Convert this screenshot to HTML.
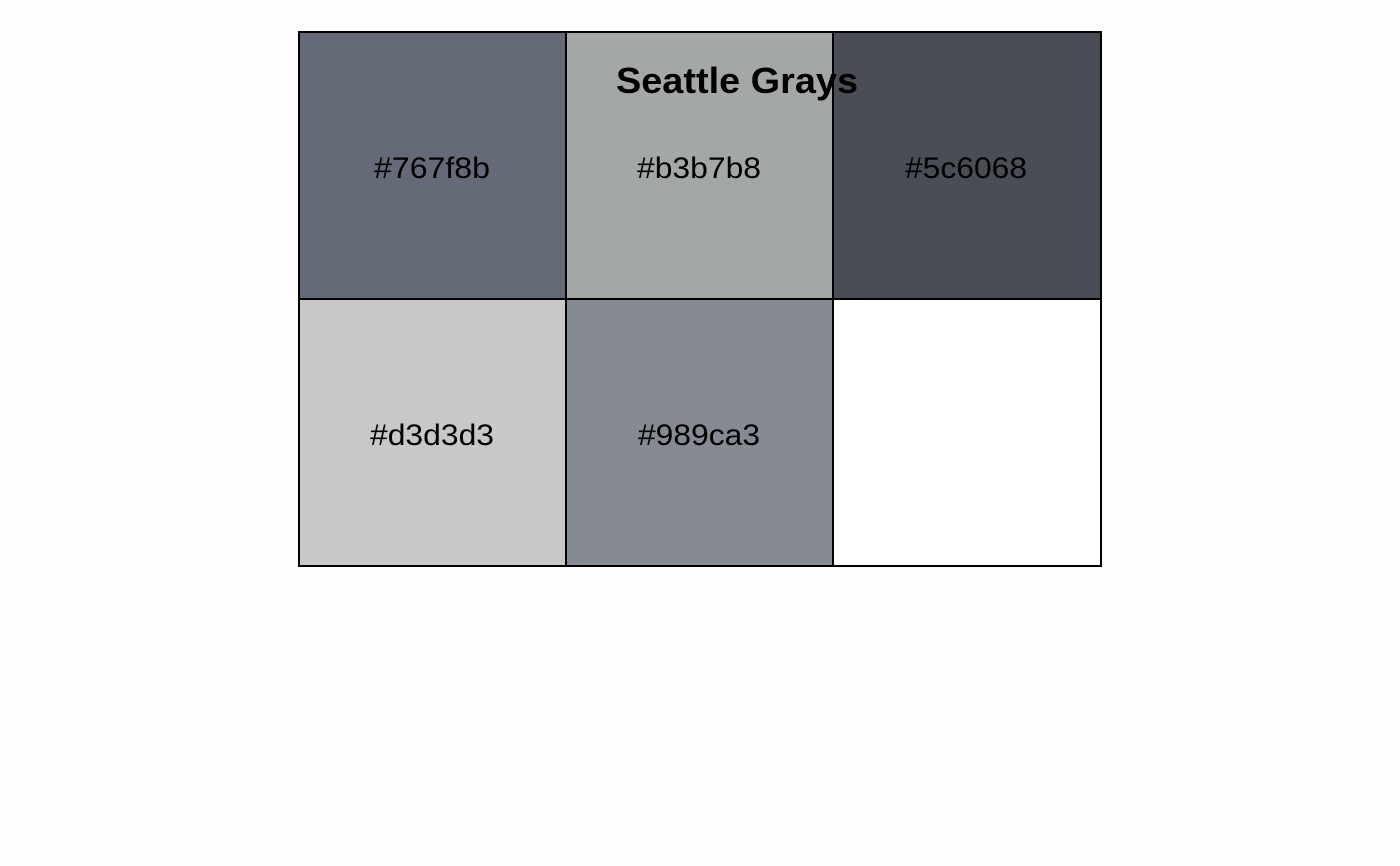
<!DOCTYPE html>
<html><head><style>html,body{margin:0;padding:0;background:#fff;}</style></head>
<body>
<svg width="1400" height="866" xmlns="http://www.w3.org/2000/svg" style="display:block">
<rect width="1400" height="866" fill="#fefefe"/>
<g stroke="#000" stroke-width="2">
<rect x="299" y="32" width="267" height="267" fill="#646a78"/>
<rect x="566" y="32" width="267" height="267" fill="#a4a7a8"/>
<rect x="833" y="32" width="268" height="267" fill="#4a4d56"/>
<rect x="299" y="299" width="267" height="267" fill="#c8c8c8"/>
<rect x="566" y="299" width="267" height="267" fill="#868a93"/>
<rect x="833" y="299" width="268" height="267" fill="#ffffff"/>
</g>
<g font-family="Liberation Sans, sans-serif" font-size="30" text-anchor="middle" fill="#000" lengthAdjust="spacingAndGlyphs">
<text x="432" y="178" textLength="116" lengthAdjust="spacingAndGlyphs">#767f8b</text>
<text x="699" y="178" textLength="124" lengthAdjust="spacingAndGlyphs">#b3b7b8</text>
<text x="966" y="178" textLength="122" lengthAdjust="spacingAndGlyphs">#5c6068</text>
<text x="432" y="445" textLength="124" lengthAdjust="spacingAndGlyphs">#d3d3d3</text>
<text x="699" y="445" textLength="122" lengthAdjust="spacingAndGlyphs">#989ca3</text>
</g>
<text x="737" y="93" font-family="Liberation Sans, sans-serif" font-size="36" font-weight="bold" text-anchor="middle" textLength="242" lengthAdjust="spacingAndGlyphs">Seattle Grays</text>
</svg>
</body></html>
